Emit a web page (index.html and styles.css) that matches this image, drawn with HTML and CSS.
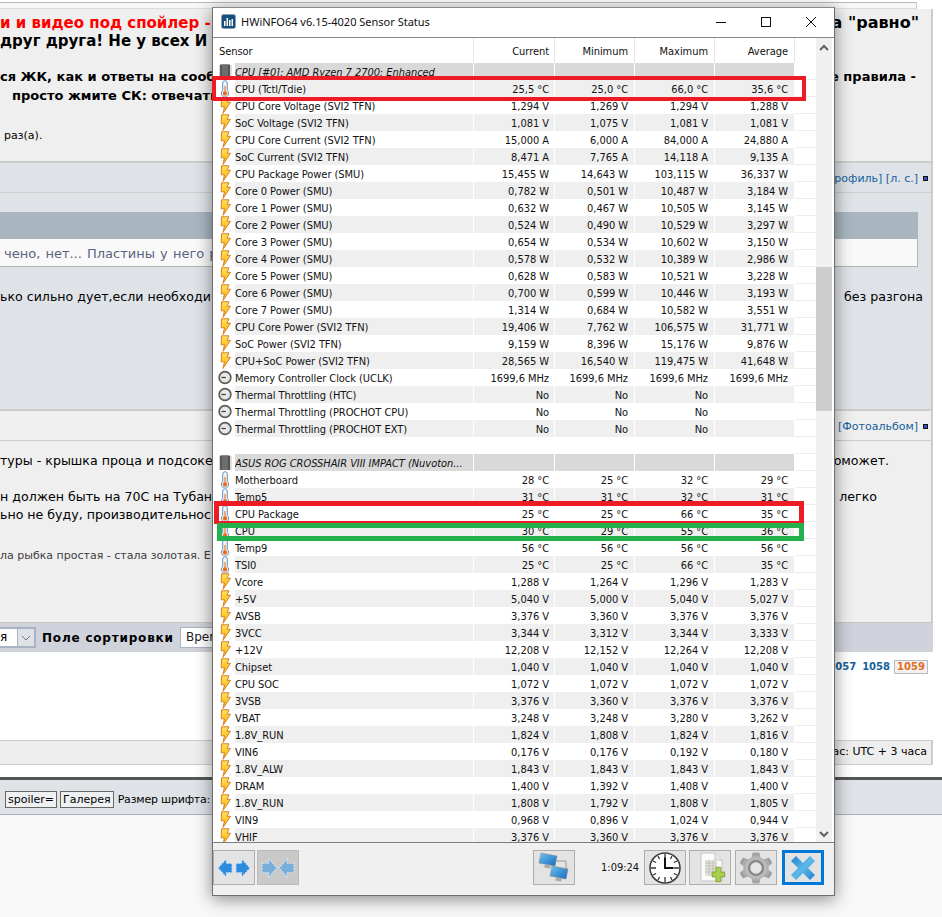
FILE: index.html
```html
<!DOCTYPE html>
<html lang="ru">
<head>
<meta charset="utf-8">
<title>HWiNFO64 Sensor Status</title>
<link rel="stylesheet" href="styles.css">
</head>
<body>
<svg class="defs" aria-hidden="true">
  <defs>
    <linearGradient id="boltg" x1="0" y1="0" x2="0" y2="1"><stop offset="0" stop-color="#ffe35a"/><stop offset="1" stop-color="#ffb000"/></linearGradient>
    <radialGradient id="gaugeg"><stop offset="0" stop-color="#f6f6f6"/><stop offset=".72" stop-color="#e2e2e2"/><stop offset="1" stop-color="#6a6a6a"/></radialGradient>
    <linearGradient id="blueg" x1="0" y1="0" x2="1" y2="1"><stop offset="0" stop-color="#1f7fd0"/><stop offset=".5" stop-color="#5db9ea"/><stop offset="1" stop-color="#1f7fd0"/></linearGradient>
    <linearGradient id="screeng" x1="0" y1="0" x2="1" y2="1"><stop offset="0" stop-color="#6fc4f2"/><stop offset="1" stop-color="#1468bd"/></linearGradient>
    <radialGradient id="gearg"><stop offset="0" stop-color="#f2f2f2"/><stop offset="1" stop-color="#9a9a9a"/></radialGradient>
    <symbol id="therm" viewBox="0 0 14 17">
      <path d="M4.700 3a2.300 2.300 0 0 1 4.600 0v7.500a3.700 3.700 0 1 1-4.600 0z" fill="#eef4fa" stroke="#6a90b8" stroke-width="1"/>
      <rect x="6.400" y="6" width="1.200" height="6" fill="#ee7a28"/>
      <circle cx="7" cy="13.400" r="2.200" fill="#ee6a1c"/>
    </symbol>
    <symbol id="bolt" viewBox="0 0 14 17">
      <path d="M3.500.8H11L9 5.300h3.500L5 16.400l1.500-6.600H3.200z" fill="url(#boltg)" stroke="#d2802a" stroke-width="1" stroke-linejoin="round"/>
    </symbol>
    <symbol id="gauge" viewBox="0 0 14 17">
      <circle cx="7" cy="8.500" r="6" fill="url(#gaugeg)" stroke="#5a5a5a" stroke-width="1.400"/>
      <path d="M3.500 8.500H8" stroke="#444" stroke-width="1.300" fill="none"/>
    </symbol>
    <symbol id="chip" viewBox="0 0 14 17">
      <rect x="2" y="1.500" width="10" height="14.500" fill="#555"/>
      <rect x="4" y="1.500" width="6" height="14.500" fill="#6e6e6e"/>
      <path d="M1 3h13M1 5h13M1 7h13M1 9h13M1 11h13M1 13h13M1 15h13" stroke="#888" stroke-width=".7" stroke-dasharray="1.600 9.500"/>
    </symbol>
  </defs>
</svg>

<main class="forum">
  <div class="top"><div class="top-inner"></div></div>

  <section class="panel">
    <div class="line h-big"><span class="red left-big">и и видео под спойлер -</span><span class="dark pad-r13">а "равно"</span></div>
    <div class="line h-big"><span class="left-big">друг друга! Не у всех И</span></div>
    <div class="line h-mid gap-top"><span>ся ЖК, как и ответы на сооб</span><span class="pad-r16">е правила -</span></div>
    <div class="line h-mid indent"><span>просто жмите СК: отвечать</span></div>
    <div class="line small gap-top2"><span class="indent-s">раз(а).</span></div>
  </section>

  <div class="strip strip-blue"><span></span><span class="links">рофиль] [л. с.]<i class="sq"></i></span></div>

  <section class="post">
    <div class="quote-head"></div>
    <div class="quote-body">чено, нет... Пластины у него р</div>
    <div class="line text one"><span>ько сильно дует,если необходи</span><span class="pad-r10">без разгона</span></div>
  </section>

  <div class="strip strip-grey"><span></span><span class="links">] [Фотоальбом]<i class="sq"></i></span></div>

  <section class="post2">
    <div class="line text"><span>туры - крышка проца и подсоке</span><span class="pad-r45">поможет.</span></div>
    <div class="line text l2"><span>н должен быть на 70С на Тубан</span><span class="pad-r55">легко</span></div>
    <div class="line text"><span>ьно не буду, производительнос</span></div>
    <div class="line note"><span>ла рыбка простая - стала золотая. Е</span></div>
  </section>

  <div class="sortbar">
    <div class="sel sel-a"><span>я</span><b class="chev"><svg width="10" height="6" viewBox="0 0 10 6"><path d="M1 1l4 4 4-4" fill="none" stroke="#777"/></svg></b></div>
    <strong class="sortlabel">Поле сортировки</strong>
    <div class="sel sel-b">Время</div>
  </div>

  <div class="pages"><span class="pnum">1057</span><span class="pnum">1058</span><span class="pcur">1059</span></div>

  <div class="tz">ас: UTC + 3 часа</div>
  <div class="spacer"></div>
  <div class="editor">
    <span class="bbtn">spoiler=</span><span class="bbtn">Галерея</span><span class="fs">Размер шрифта:</span>
  </div>
  <div class="rest"></div>
</main>

<div class="win">
  <header class="titlebar">
    <svg class="appicon" width="15" height="15" viewBox="0 0 15 15"><rect x=".5" y=".5" width="14" height="14" rx="2" fill="#174f7c" stroke="#8aa0b2"/><path d="M3 12V7h1.500v5zM5.500 12V4H7v8zM8 12V6h1.500v6zM10.500 12V5H12v7z" fill="#fff"/></svg>
    <span class="wtitle">HWiNFO64 v6.15-4020 Sensor Status</span>
    <span class="wbtns">
      <svg width="10" height="10" viewBox="0 0 10 10"><path d="M0 5.500h10" stroke="#111"/></svg>
      <svg width="10" height="10" viewBox="0 0 10 10"><rect x=".5" y=".5" width="9" height="9" fill="none" stroke="#111"/></svg>
      <svg width="10" height="10" viewBox="0 0 10 10"><path d="M0 0l10 10M10 0L0 10" stroke="#111"/></svg>
    </span>
  </header>

  <div class="tablewrap">
    <div class="table">
      <div class="row head"><div class="c-sensor">Sensor</div><div>Current</div><div>Minimum</div><div>Maximum</div><div>Average</div><div class="c-end"></div></div>
      <div class="rows">
        <div class="row grp"><div class="c-ic"><svg><use href="#chip"/></svg></div><div class="c-name">CPU [#0]: AMD Ryzen 7 2700: Enhanced</div><div></div><div></div><div></div><div></div><div class="c-end"></div></div>
        <div class="row alt"><div class="c-ic"><svg><use href="#therm"/></svg></div><div class="c-name">CPU (Tctl/Tdie)</div><div>25,5 °C</div><div>25,0 °C</div><div>66,0 °C</div><div>35,6 °C</div><div class="c-end"></div></div>
        <div class="row"><div class="c-ic"><svg><use href="#bolt"/></svg></div><div class="c-name">CPU Core Voltage (SVI2 TFN)</div><div>1,294 V</div><div>1,269 V</div><div>1,294 V</div><div>1,288 V</div><div class="c-end"></div></div>
        <div class="row alt"><div class="c-ic"><svg><use href="#bolt"/></svg></div><div class="c-name">SoC Voltage (SVI2 TFN)</div><div>1,081 V</div><div>1,075 V</div><div>1,081 V</div><div>1,081 V</div><div class="c-end"></div></div>
        <div class="row"><div class="c-ic"><svg><use href="#bolt"/></svg></div><div class="c-name">CPU Core Current (SVI2 TFN)</div><div>15,000 A</div><div>6,000 A</div><div>84,000 A</div><div>24,880 A</div><div class="c-end"></div></div>
        <div class="row alt"><div class="c-ic"><svg><use href="#bolt"/></svg></div><div class="c-name">SoC Current (SVI2 TFN)</div><div>8,471 A</div><div>7,765 A</div><div>14,118 A</div><div>9,135 A</div><div class="c-end"></div></div>
        <div class="row"><div class="c-ic"><svg><use href="#bolt"/></svg></div><div class="c-name">CPU Package Power (SMU)</div><div>15,455 W</div><div>14,643 W</div><div>103,115 W</div><div>36,337 W</div><div class="c-end"></div></div>
        <div class="row alt"><div class="c-ic"><svg><use href="#bolt"/></svg></div><div class="c-name">Core 0 Power (SMU)</div><div>0,782 W</div><div>0,501 W</div><div>10,487 W</div><div>3,184 W</div><div class="c-end"></div></div>
        <div class="row"><div class="c-ic"><svg><use href="#bolt"/></svg></div><div class="c-name">Core 1 Power (SMU)</div><div>0,632 W</div><div>0,467 W</div><div>10,505 W</div><div>3,145 W</div><div class="c-end"></div></div>
        <div class="row alt"><div class="c-ic"><svg><use href="#bolt"/></svg></div><div class="c-name">Core 2 Power (SMU)</div><div>0,524 W</div><div>0,490 W</div><div>10,529 W</div><div>3,297 W</div><div class="c-end"></div></div>
        <div class="row"><div class="c-ic"><svg><use href="#bolt"/></svg></div><div class="c-name">Core 3 Power (SMU)</div><div>0,654 W</div><div>0,534 W</div><div>10,602 W</div><div>3,150 W</div><div class="c-end"></div></div>
        <div class="row alt"><div class="c-ic"><svg><use href="#bolt"/></svg></div><div class="c-name">Core 4 Power (SMU)</div><div>0,578 W</div><div>0,532 W</div><div>10,389 W</div><div>2,986 W</div><div class="c-end"></div></div>
        <div class="row"><div class="c-ic"><svg><use href="#bolt"/></svg></div><div class="c-name">Core 5 Power (SMU)</div><div>0,628 W</div><div>0,583 W</div><div>10,521 W</div><div>3,228 W</div><div class="c-end"></div></div>
        <div class="row alt"><div class="c-ic"><svg><use href="#bolt"/></svg></div><div class="c-name">Core 6 Power (SMU)</div><div>0,700 W</div><div>0,599 W</div><div>10,446 W</div><div>3,193 W</div><div class="c-end"></div></div>
        <div class="row"><div class="c-ic"><svg><use href="#bolt"/></svg></div><div class="c-name">Core 7 Power (SMU)</div><div>1,314 W</div><div>0,684 W</div><div>10,582 W</div><div>3,551 W</div><div class="c-end"></div></div>
        <div class="row alt"><div class="c-ic"><svg><use href="#bolt"/></svg></div><div class="c-name">CPU Core Power (SVI2 TFN)</div><div>19,406 W</div><div>7,762 W</div><div>106,575 W</div><div>31,771 W</div><div class="c-end"></div></div>
        <div class="row"><div class="c-ic"><svg><use href="#bolt"/></svg></div><div class="c-name">SoC Power (SVI2 TFN)</div><div>9,159 W</div><div>8,396 W</div><div>15,176 W</div><div>9,876 W</div><div class="c-end"></div></div>
        <div class="row alt"><div class="c-ic"><svg><use href="#bolt"/></svg></div><div class="c-name">CPU+SoC Power (SVI2 TFN)</div><div>28,565 W</div><div>16,540 W</div><div>119,475 W</div><div>41,648 W</div><div class="c-end"></div></div>
        <div class="row"><div class="c-ic"><svg><use href="#gauge"/></svg></div><div class="c-name">Memory Controller Clock (UCLK)</div><div>1699,6 MHz</div><div>1699,6 MHz</div><div>1699,6 MHz</div><div>1699,6 MHz</div><div class="c-end"></div></div>
        <div class="row alt"><div class="c-ic"><svg><use href="#gauge"/></svg></div><div class="c-name">Thermal Throttling (HTC)</div><div>No</div><div>No</div><div>No</div><div></div><div class="c-end"></div></div>
        <div class="row"><div class="c-ic"><svg><use href="#gauge"/></svg></div><div class="c-name">Thermal Throttling (PROCHOT CPU)</div><div>No</div><div>No</div><div>No</div><div></div><div class="c-end"></div></div>
        <div class="row alt"><div class="c-ic"><svg><use href="#gauge"/></svg></div><div class="c-name">Thermal Throttling (PROCHOT EXT)</div><div>No</div><div>No</div><div>No</div><div></div><div class="c-end"></div></div>
        <div class="row"><div class="c-ic"></div><div class="c-name"></div><div></div><div></div><div></div><div></div><div class="c-end"></div></div>
        <div class="row grp"><div class="c-ic"><svg><use href="#chip"/></svg></div><div class="c-name">ASUS ROG CROSSHAIR VIII IMPACT (Nuvoton...</div><div></div><div></div><div></div><div></div><div class="c-end"></div></div>
        <div class="row"><div class="c-ic"><svg><use href="#therm"/></svg></div><div class="c-name">Motherboard</div><div>28 °C</div><div>25 °C</div><div>32 °C</div><div>29 °C</div><div class="c-end"></div></div>
        <div class="row alt"><div class="c-ic"><svg><use href="#therm"/></svg></div><div class="c-name">Temp5</div><div>31 °C</div><div>31 °C</div><div>32 °C</div><div>31 °C</div><div class="c-end"></div></div>
        <div class="row"><div class="c-ic"><svg><use href="#therm"/></svg></div><div class="c-name">CPU Package</div><div>25 °C</div><div>25 °C</div><div>66 °C</div><div>35 °C</div><div class="c-end"></div></div>
        <div class="row alt"><div class="c-ic"><svg><use href="#therm"/></svg></div><div class="c-name">CPU</div><div>30 °C</div><div>29 °C</div><div>55 °C</div><div>36 °C</div><div class="c-end"></div></div>
        <div class="row"><div class="c-ic"><svg><use href="#therm"/></svg></div><div class="c-name">Temp9</div><div>56 °C</div><div>56 °C</div><div>56 °C</div><div>56 °C</div><div class="c-end"></div></div>
        <div class="row alt"><div class="c-ic"><svg><use href="#therm"/></svg></div><div class="c-name">TSI0</div><div>25 °C</div><div>25 °C</div><div>66 °C</div><div>35 °C</div><div class="c-end"></div></div>
        <div class="row"><div class="c-ic"><svg><use href="#bolt"/></svg></div><div class="c-name">Vcore</div><div>1,288 V</div><div>1,264 V</div><div>1,296 V</div><div>1,283 V</div><div class="c-end"></div></div>
        <div class="row alt"><div class="c-ic"><svg><use href="#bolt"/></svg></div><div class="c-name">+5V</div><div>5,040 V</div><div>5,000 V</div><div>5,040 V</div><div>5,027 V</div><div class="c-end"></div></div>
        <div class="row"><div class="c-ic"><svg><use href="#bolt"/></svg></div><div class="c-name">AVSB</div><div>3,376 V</div><div>3,360 V</div><div>3,376 V</div><div>3,376 V</div><div class="c-end"></div></div>
        <div class="row alt"><div class="c-ic"><svg><use href="#bolt"/></svg></div><div class="c-name">3VCC</div><div>3,344 V</div><div>3,312 V</div><div>3,344 V</div><div>3,333 V</div><div class="c-end"></div></div>
        <div class="row"><div class="c-ic"><svg><use href="#bolt"/></svg></div><div class="c-name">+12V</div><div>12,208 V</div><div>12,152 V</div><div>12,264 V</div><div>12,208 V</div><div class="c-end"></div></div>
        <div class="row alt"><div class="c-ic"><svg><use href="#bolt"/></svg></div><div class="c-name">Chipset</div><div>1,040 V</div><div>1,040 V</div><div>1,040 V</div><div>1,040 V</div><div class="c-end"></div></div>
        <div class="row"><div class="c-ic"><svg><use href="#bolt"/></svg></div><div class="c-name">CPU SOC</div><div>1,072 V</div><div>1,072 V</div><div>1,072 V</div><div>1,072 V</div><div class="c-end"></div></div>
        <div class="row alt"><div class="c-ic"><svg><use href="#bolt"/></svg></div><div class="c-name">3VSB</div><div>3,376 V</div><div>3,360 V</div><div>3,376 V</div><div>3,376 V</div><div class="c-end"></div></div>
        <div class="row"><div class="c-ic"><svg><use href="#bolt"/></svg></div><div class="c-name">VBAT</div><div>3,248 V</div><div>3,248 V</div><div>3,280 V</div><div>3,262 V</div><div class="c-end"></div></div>
        <div class="row alt"><div class="c-ic"><svg><use href="#bolt"/></svg></div><div class="c-name">1.8V_RUN</div><div>1,824 V</div><div>1,808 V</div><div>1,824 V</div><div>1,816 V</div><div class="c-end"></div></div>
        <div class="row"><div class="c-ic"><svg><use href="#bolt"/></svg></div><div class="c-name">VIN6</div><div>0,176 V</div><div>0,176 V</div><div>0,192 V</div><div>0,180 V</div><div class="c-end"></div></div>
        <div class="row alt"><div class="c-ic"><svg><use href="#bolt"/></svg></div><div class="c-name">1.8V_ALW</div><div>1,843 V</div><div>1,843 V</div><div>1,843 V</div><div>1,843 V</div><div class="c-end"></div></div>
        <div class="row"><div class="c-ic"><svg><use href="#bolt"/></svg></div><div class="c-name">DRAM</div><div>1,400 V</div><div>1,392 V</div><div>1,408 V</div><div>1,400 V</div><div class="c-end"></div></div>
        <div class="row alt"><div class="c-ic"><svg><use href="#bolt"/></svg></div><div class="c-name">1.8V_RUN</div><div>1,808 V</div><div>1,792 V</div><div>1,808 V</div><div>1,805 V</div><div class="c-end"></div></div>
        <div class="row"><div class="c-ic"><svg><use href="#bolt"/></svg></div><div class="c-name">VIN9</div><div>0,968 V</div><div>0,896 V</div><div>1,024 V</div><div>0,944 V</div><div class="c-end"></div></div>
        <div class="row alt"><div class="c-ic"><svg><use href="#bolt"/></svg></div><div class="c-name">VHIF</div><div>3,376 V</div><div>3,360 V</div><div>3,376 V</div><div>3,376 V</div><div class="c-end"></div></div>
      </div>
    </div>
    <div class="scrollbar">
      <svg width="16" height="16" viewBox="0 0 16 16"><path d="M4 10l4-4 4 4" fill="none" stroke="#606060" stroke-width="2"/></svg>
      <div class="track"><div class="thumb"></div></div>
      <svg width="16" height="16" viewBox="0 0 16 16"><path d="M4 6l4 4 4-4" fill="none" stroke="#606060" stroke-width="2"/></svg>
    </div>
    <div class="mark mark-a"></div>
    <div class="mark mark-b"></div>
    <div class="mark mark-c"></div>
  </div>

  <footer class="toolbar">
    <button class="tbtn" type="button"><svg width="34" height="28" viewBox="0 0 36 28"><path d="M16 9h-6V4L1 14l9 10v-5h6zM20 9h6V4l9 10-9 10v-5h-6z" fill="#2c8de0" stroke="#dfe6ee" stroke-width="1.200" stroke-dasharray="2 1"/></svg></button>
    <button class="tbtn off" type="button"><svg width="34" height="28" viewBox="0 0 36 28"><path d="M1 9h7V4l9 10-9 10v-5H1zM35 9h-7V4l-9 10 9 10v-5h7z" fill="#78aedb" stroke="#dde3ea" stroke-width="1.200" stroke-dasharray="2 1"/></svg></button>
    <span class="grow"></span>
    <button class="tbtn net" type="button"><svg width="34" height="34" viewBox="0 0 34 34"><path d="M18 10h11v10" fill="none" stroke="#999"/><path d="M4 2l16 3-2 10-16-3z" fill="url(#screeng)" stroke="#8a8a8a" stroke-width=".6"/><path d="M8 13.500l6 1-1 3-6-1z" fill="#a9a9a9"/><path d="M15 15l16 3-2 10-16-3z" fill="url(#screeng)" stroke="#8a8a8a" stroke-width=".6"/><path d="M19 26.500l6 1-1 3-6-1z" fill="#a9a9a9"/></svg></button>
    <span class="timer">1:09:24</span>
    <button class="tbtn gap3" type="button"><svg width="34" height="34" viewBox="0 0 34 34"><circle cx="17" cy="17" r="15" fill="#fff" stroke="#3a3a3a" stroke-width="1.500"/><path d="M17 3v5M17 26v5M3 17h5M26 17h5M10 5l1.500 3M24 5l-1.500 3M5 10l3 1.500M29 10l-3 1.500M5 24l3-1.500M29 24l-3-1.500M10 29l1.500-3M24 29l-1.500-3" stroke="#333" stroke-width="1.300"/><path d="M17 6.500V17h8.500" fill="none" stroke="#111" stroke-width="2"/></svg></button>
    <button class="tbtn gap4" type="button"><svg width="34" height="34" viewBox="0 0 34 34"><path d="M8 2h14l7 7v21H8z" fill="#fbfbfb" stroke="#c4c4c4"/><path d="M22 2v7h7" fill="#e8e8e8" stroke="#c4c4c4"/><path d="M12 9h12v16H12z" fill="#e2e2da"/><path d="M12 12h12M12 15h12M12 18h12M12 21h12M16 9v16M20 9v16" stroke="#b9b9ae" stroke-width=".7"/><path d="M26 18h5v5h4v5h-4v5h-5v-5h-4v-5h4z" transform="translate(-2 -1) scale(.96)" fill="#a9cf4c" stroke="#82a537"/></svg></button>
    <button class="tbtn gap5" type="button"><svg width="34" height="34" viewBox="0 0 34 34"><path d="M14 2h6l1 5 4 2 5-2 3 5-4 3v4l4 3-3 5-5-2-4 2-1 5h-6l-1-5-4-2-5 2-3-5 4-3v-4l-4-3 3-5 5 2 4-2z" fill="url(#gearg)" stroke="#a8a8a8"/><circle cx="17" cy="17" r="7" fill="#e6e6e6" stroke="#8a8a8a" stroke-width="2.500"/></svg></button>
    <button class="tbtn active" type="button"><svg width="26" height="26" viewBox="0 0 26 26"><path d="M6 1l7 7 7-7 5 5-7 7 7 7-5 5-7-7-7 7-5-5 7-7-7-7z" fill="url(#blueg)"/></svg></button>
  </footer>
</div>
</body>
</html>
```
FILE: styles.css
```css
* { box-sizing: border-box; }
html, body { margin: 0; padding: 0; }
body { width: 942px; height: 917px; overflow: hidden; position: relative; background: #fff; font-family: "DejaVu Sans", sans-serif; color: #000; }
.defs { position: absolute; width: 0; height: 0; }

/* background forum page */
.forum { width: 942px; }
.top { height: 9px; padding-top: 2px; }
.top-inner { width: 917px; height: 7px; background: #f7f7f7; border-top: 1px solid #bbb; border-right: 1px solid #ccc; border-bottom: 1px solid #ddd; }
.line { display: flex; justify-content: space-between; white-space: nowrap; width: 933px; }
.panel { width: 933px; height: 154px; padding-top: 5px; background: #efefef; border-right: 2px solid #ccc; border-bottom: 2px solid #ccc; font-weight: bold; }
.panel .line { width: 931px; }
.h-big { height: 18px; line-height: 18px; font-size: 16px; }
.left-big { font-size: 15px; }
.h-mid { height: 19px; line-height: 19px; font-size: 13px; }
.red { color: #f00; }
.gap-top { margin-top: 17px; }
.gap-top2 { margin-top: 22px; }
.indent { padding-left: 12px; }
.small { font-size: 11px; font-weight: normal; height: 18px; line-height: 18px; }
.indent-s { padding-left: 4px; }
.pad-r13 { padding-right: 12px; }
.pad-r16 { padding-right: 15px; }
.pad-r10 { padding-right: 8px; }
.pad-r45 { padding-right: 42px; }
.pad-r55 { padding-right: 54px; }

.strip { width: 933px; height: 30px; padding-top: 1px; display: flex; justify-content: space-between; align-items: center; border-right: 2px solid #ccc; border-bottom: 1px solid #ccc; font-size: 11px; }
.strip-blue { background: #dfe3e8; }
.strip-grey { background: #efefef; }
.links { color: #15619c; display: flex; align-items: center; }
.sq { display: inline-block; width: 5px; height: 5px; margin: 0 3px 0 5px; background: #2b52c8; border: 1px solid #111; }

.post { width: 933px; height: 218px; padding-top: 19px; background: #dfe3e8; border-right: 2px solid #ccc; border-bottom: 2px solid #ccc; font-size: 13px; }
.quote-head { width: 918px; height: 27px; background: #a9b6c0; }
.quote-body { width: 918px; height: 28px; padding-left: 4px; word-spacing: 1px; line-height: 29px; background: #f9f9f9; border-right: 1px solid #b5b5b5; border-bottom: 1px solid #b5b5b5; color: #5a6480; white-space: nowrap; overflow: hidden; }
.line.text { height: 18px; line-height: 18px; font-size: 12.600px; width: 931px; }
.one { margin-top: 21px; }

.post2 { width: 933px; height: 181px; padding-top: 11px; background: #efefef; border-right: 2px solid #ccc; }
.l2 { margin-top: 18px; }
.note { font-size: 11px; height: 18px; line-height: 18px; margin-top: 23px; color: #3e3e3e; }

.sortbar { width: 933px; height: 30px; background: #d1d3dc; border-top: 1px solid #c6c6c6; display: flex; align-items: center; }
.sel { height: 21px; background: #fff; border: 1px solid #aab3c2; font-size: 12px; line-height: 19px; overflow: hidden; }
.sel-a { width: 36px; display: flex; justify-content: space-between; border-width: 2px 2px 2px 0; }
.chev { width: 17px; background: #dfe2e6; border-left: 1px solid #aab3c2; display: flex; align-items: center; justify-content: center; }
.sel-a span { line-height: 17px; }
.sortlabel { margin: 0 7px 0 6px; font-size: 12px; letter-spacing: .8px; white-space: nowrap; width: 131px; }
.sel-b { width: 120px; padding-left: 5px; color: #222; }

.pages { width: 933px; height: 88px; display: flex; justify-content: flex-end; align-items: flex-start; gap: 6px; padding: 8px 5px 0 0; font-size: 10px; font-weight: bold; }
.pnum { color: #15619c; line-height: 13px; }
.pcur { color: #e0701a; border: 1px solid #bbb; background: #f3eff5; margin-left: -2px; line-height: 12px; height: 14px; width: 34px; text-align: center; }

.tz { width: 933px; height: 25px; background: #eee; border: 1px solid #ccc; border-width: 1px 2px 1px 0; text-align: right; padding-right: 4px; font-size: 11px; line-height: 22px; }
.spacer { height: 12px; }
.editor { height: 38px; padding: 5px 0 0 5px; background: #dfe3e8; border-top: 3px solid #555; border-bottom: 1px solid #a9b1bb; display: flex; align-items: center; gap: 3px; font-size: 11px; }
.bbtn { height: 17px; line-height: 15px; padding: 0 2px; border: 1px solid #666; background: #eef0f2; white-space: nowrap; }
.fs { margin-left: 1px; letter-spacing: -.2px; white-space: nowrap; }
.rest { height: 103px; background: #f8f8f8; }

/* sensor window */
.win { position: absolute; left: 212px; top: 7px; width: 623px; height: 889px; background: #f0f0f0; border: 1px solid #6f6f6f; border-top-color: #8a8a8a; box-shadow: 0 3px 16px rgba(0,0,0,.45); font-family: "DejaVu Sans", sans-serif; font-stretch: condensed; display: flex; flex-direction: column; color: #111; }
.titlebar { height: 29px; flex: none; padding: 0 0 2px 8px; background: #fff; display: flex; align-items: center; }
.appicon { flex: none; }
.wtitle { margin-left: 5px; font-family: "Noto Sans", sans-serif; font-stretch: normal; font-size: 11px; }
.wbtns { margin-left: auto; display: flex; gap: 35px; padding-right: 18px; }
.tablewrap { position: relative; height: 806px; flex: none; display: flex; border-top: 1px solid #888; border-bottom: 1px solid #7c7c7c; background: #fff; }
.table { width: 603px; flex: none; padding-left: 1px; }
.rows { height: 779px; overflow: hidden; }
.row { display: grid; grid-template-columns: 21px 239px 81px 80px 80px 80px 21px; height: 17px; font-size: 11px; letter-spacing: -.05px; line-height: 19px; background: #fff; }
.row > div { text-align: right; padding-right: 6px; border-right: 1px solid #fff; white-space: nowrap; overflow: hidden; }
.row > .c-ic { padding: 0; border: 0; background: #fff; display: flex; justify-content: center; }
.c-ic svg { width: 14px; height: 17px; }
.row > .c-name { text-align: left; padding: 0; }
.row > .c-name + div { padding-right: 5px; }
.row > .c-end { padding: 0; background: #fff; border-right: 0; border-bottom: 1px solid #eee; }
.alt > div { background: #efefef; }
.grp > div { background: #d9d9d9; }
.grp .c-name { font-style: italic; }
.head { height: 25px; line-height: 27px; }
.head > div { border-right: 1px solid #e6e6e6; }
.head > .c-sensor { grid-column: 1 / span 2; text-align: left; padding-left: 5px; }
.head > .c-sensor + div { padding-right: 5px; }
.head > .c-end { border-bottom: 0; }
.scrollbar { width: 16px; flex: none; background: #f0f0f0; display: flex; flex-direction: column; padding-top: 2px; }
.scrollbar svg { flex: none; }
.track { flex: 1; padding-top: 211px; }
.thumb { height: 144px; background: #cdcdcd; }
.mark { position: absolute; pointer-events: none; }
.mark-a { left: -1px; top: 38px; width: 594px; height: 25px; border: 4px solid #ed1c24; }
.mark-b { left: 1px; top: 463px; width: 590px; height: 23px; border: 5px solid #ed1c24; border-bottom-width: 3px; }
.mark-c { left: 4px; top: 485px; width: 587px; height: 18px; border: 5px solid #22b14c; }

.toolbar { flex: 1; display: flex; align-items: flex-start; padding: 7px 10px 0 0; background: #f0f0f0; }
.tbtn { width: 42px; height: 35px; padding: 0; margin-right: 2px; background: #e3e3e3; border: 1px solid #adadad; display: flex; align-items: center; justify-content: center; }
.tbtn svg { display: block; }
.off { background: #c9c9c9; border-color: #bbb; }
.net { margin-right: 0; }
.gap3 { margin-right: 3px; }
.gap4 { margin-right: 4px; }
.gap5 { margin-right: 5px; }
.active { border: 3px solid #0078d7; margin-right: 0; }
.grow { flex: 1; }
.timer { width: 69px; padding-left: 26px; line-height: 35px; font-size: 11px; white-space: nowrap; }
```
